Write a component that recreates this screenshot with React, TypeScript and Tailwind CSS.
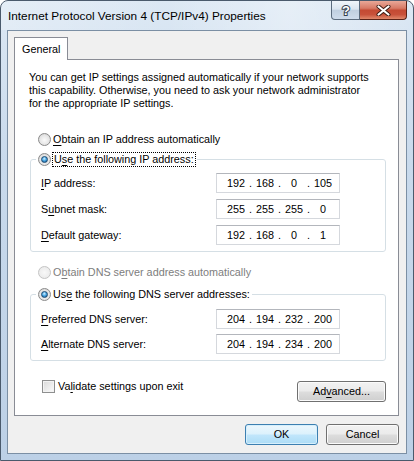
import React from "react";

const U = ({ children }: { children: React.ReactNode }) => (
  <span className="underline decoration-1 underline-offset-[2px]">{children}</span>
);

function Radio({ checked, disabled }: { checked?: boolean; disabled?: boolean }) {
  return (
    <span
      className={
        disabled
          ? "flex h-[13px] w-[13px] shrink-0 items-center justify-center rounded-full border border-[#c4c4c4] bg-[radial-gradient(circle_at_50%_50%,#f8f8f8_0%,#ececec_70%,#e2e2e2_100%)]"
          : "flex h-[13px] w-[13px] shrink-0 items-center justify-center rounded-full border border-[#8a8a8a] bg-[radial-gradient(circle_at_50%_55%,#fafafa_0%,#e6e6e6_55%,#c9c9c9_100%)]"
      }
    >
      {checked && (
        <span className="h-[7px] w-[7px] rounded-full border border-[#1c4a72] bg-[radial-gradient(circle_at_45%_35%,#d8f2ff_0%,#4aa8e4_45%,#0f4e86_100%)]" />
      )}
    </span>
  );
}

function IpBox({ parts }: { parts: string[] }) {
  return (
    <div className="flex h-[20px] w-[124px] items-center border border-[#d5d8dd] border-t-[#b3b6bc] bg-white pl-[7px]">
      {parts.map((p, i) => (
        <React.Fragment key={i}>
          {i > 0 && <span className="w-[5px] text-center">.</span>}
          <span className="w-[24px] text-center">{p}</span>
        </React.Fragment>
      ))}
    </div>
  );
}

function Field({ label, parts }: { label: React.ReactNode; parts: string[] }) {
  return (
    <div className="flex items-center">
      <div className="w-[185px] pl-[10px]">{label}</div>
      <IpBox parts={parts} />
    </div>
  );
}

function WinButton({ children, def, className }: { children: React.ReactNode; def?: boolean; className: string }) {
  return (
    <div
      className={
        (def
          ? "border-[#3c7fb1] bg-[linear-gradient(180deg,#ecf7fd_0%,#dcf1fc_48%,#c1e6fb_52%,#acdcf6_100%)] shadow-[inset_0_0_0_1px_#d6effc] "
          : "border-[#707070] bg-[linear-gradient(180deg,#f2f2f2_0%,#ebebeb_48%,#dddddd_52%,#cfcfcf_100%)] shadow-[inset_0_0_0_1px_#fbfbfb] ") +
        "flex h-[21px] items-center justify-center rounded-[3px] border " +
        className
      }
    >
      {children}
    </div>
  );
}

export default function App() {
  return (
    <div className="flex h-[461px] w-[414px] flex-col overflow-hidden rounded-t-[8px] border border-[#4a5a6c] bg-[linear-gradient(180deg,#dce8f4_0%,#c9daec_35%,#bcd0e6_100%)] font-['Liberation_Sans',Arial,sans-serif] text-[10.8px] leading-[13px] text-black">
      {/* title bar */}
      <div className="flex h-[29px] shrink-0 bg-[linear-gradient(90deg,rgba(255,255,255,0.25)_0%,rgba(255,255,255,0)_40%,rgba(255,255,255,0.3)_70%,rgba(255,255,255,0)_100%)]">
        <div className="ml-[7px] mt-[8px] text-[11.8px] leading-[14px] whitespace-nowrap">
          Internet Protocol Version 4 (TCP/IPv4) Properties
        </div>
        <div className="ml-auto mr-[6px] flex h-[19px]">
          <div className="flex w-[29px] items-center justify-center rounded-bl-[4px] border border-t-0 border-[#5b6b7d] bg-[linear-gradient(180deg,#f0f5fa_0%,#dbe5f0_45%,#c0cfe0_52%,#cfdcec_100%)]">
            <svg width="12" height="15" viewBox="0 0 12 15">
              <text x="6" y="12" textAnchor="middle" fontSize="13" fontWeight="bold" fontFamily="Liberation Sans, Arial, sans-serif" fill="#ffffff" stroke="#33404e" strokeWidth="2" paintOrder="stroke">?</text>
            </svg>
          </div>
          <div className="flex w-[47px] items-center justify-center rounded-br-[4px] border border-l-0 border-t-0 border-[#5a2217] bg-[linear-gradient(180deg,#e9a898_0%,#d77a66_40%,#c44a33_52%,#c8513a_75%,#e0886b_100%)]">
            <svg width="15" height="11" viewBox="0 0 15 11">
              <path d="M2.5 1.5 L12.5 9.5 M12.5 1.5 L2.5 9.5" stroke="#3a1a12" strokeWidth="4" strokeLinecap="round" />
              <path d="M2.5 1.5 L12.5 9.5 M12.5 1.5 L2.5 9.5" stroke="#ffffff" strokeWidth="2.2" strokeLinecap="round" />
            </svg>
          </div>
        </div>
      </div>

      {/* client area */}
      <div className="mx-[6px] flex h-[424px] shrink-0 flex-col border border-[#7b8fa4] bg-[#f0f0f0] pl-[6px] pt-[6px]">
        {/* tab header */}
        <div className="relative z-10 -mb-px flex h-[23px] w-[54px] items-center border border-b-0 border-[#898c95] bg-white pl-[7px]">
          General
        </div>
        {/* tab page */}
        <div className="flex h-[357px] w-[385px] flex-col border border-[#898c95] bg-white">
          <div className="ml-[14px] mt-[11px]">
            <div className="whitespace-nowrap">You can get IP settings assigned automatically if your network supports</div>
            <div className="whitespace-nowrap">this capability. Otherwise, you need to ask your network administrator</div>
            <div className="whitespace-nowrap">for the appropriate IP settings.</div>
          </div>

          <div className="ml-[23px] mt-[21px] flex h-[16px] items-center">
            <Radio />
            <span className="ml-[2px] whitespace-nowrap"><U>O</U>btain an IP address automatically</span>
          </div>

          <fieldset className="ml-[15px] mt-[4px] w-[356px] rounded-[3px] border border-[#d5dfe5] pb-[6px]">
            <legend className="ml-[5px] pl-[2px] pr-[1px]">
              <div className="flex h-[17px] items-center">
                <Radio checked />
                <span className="ml-[1px] whitespace-nowrap border border-dotted border-black px-[1px]">
                  U<U>s</U>e the following IP address:
                </span>
              </div>
            </legend>
            <div className="mt-[5px] flex flex-col gap-[6px]">
              <Field label={<><U>I</U>P address:</>} parts={["192", "168", "0", "105"]} />
              <Field label={<>S<U>u</U>bnet mask:</>} parts={["255", "255", "255", "0"]} />
              <Field label={<><U>D</U>efault gateway:</>} parts={["192", "168", "0", "1"]} />
            </div>
          </fieldset>

          <div className="ml-[23px] mt-[12px] flex h-[16px] items-center text-[#7d7d7d]">
            <Radio disabled />
            <span className="ml-[2px] whitespace-nowrap">O<U>b</U>tain DNS server address automatically</span>
          </div>

          <fieldset className="ml-[15px] mt-[6px] w-[356px] rounded-[3px] border border-[#d5dfe5] pb-[6px]">
            <legend className="ml-[5px] pl-[2px] pr-[2px]">
              <div className="flex h-[17px] items-center">
                <Radio checked />
                <span className="ml-[2px] whitespace-nowrap">Us<U>e</U> the following DNS server addresses:</span>
              </div>
            </legend>
            <div className="mt-[6px] flex flex-col gap-[5px]">
              <Field label={<><U>P</U>referred DNS server:</>} parts={["204", "194", "232", "200"]} />
              <Field label={<><U>A</U>lternate DNS server:</>} parts={["204", "194", "234", "200"]} />
            </div>
          </fieldset>

          <div className="mt-[18px] flex items-start">
            <div className="ml-[27px] flex h-[15px] items-center">
              <span className="h-[13px] w-[13px] shrink-0 border border-[#8e8f8f] bg-[linear-gradient(135deg,#d9d9d9_0%,#eeeeee_60%,#fbfbfb_100%)] shadow-[inset_0_0_0_1px_#f3f3f3]" />
              <span className="ml-[3px] whitespace-nowrap">Va<U>l</U>idate settings upon exit</span>
            </div>
            <WinButton className="ml-auto mr-[12px] mt-[2px] w-[89px]">
              Ad<U>v</U>anced...
            </WinButton>
          </div>
        </div>

        <div className="mt-[8px] flex w-[385px] justify-end gap-[8px]">
          <WinButton def className="w-[73px]">OK</WinButton>
          <WinButton className="w-[73px]">Cancel</WinButton>
        </div>
      </div>
    </div>
  );
}
